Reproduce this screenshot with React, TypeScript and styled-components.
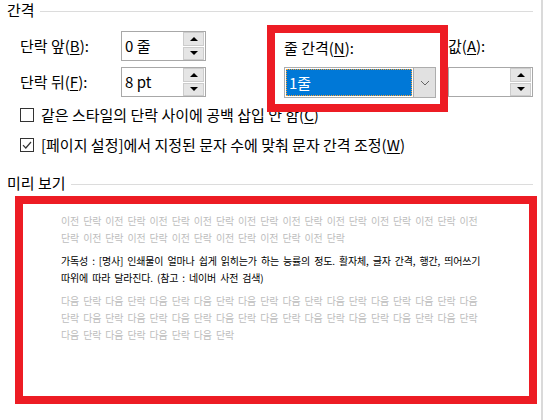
import React from 'react';
import styled, { createGlobalStyle } from 'styled-components';

const GlobalStyle = createGlobalStyle`
  html, body {
    margin: 0;
    padding: 0;
    background: #fff;
  }
  body {
    font-family: 'Noto Sans CJK KR', 'Noto Sans', sans-serif;
    color: #000;
  }
`;

const PREV_LINES = ['이전 단락 '.repeat(9) + '이전', '단락' + ' 이전 단락'.repeat(6)];
const BODY_LINES = [
  '가독성 : [명사] 인쇄물이 얼마나 쉽게 읽히는가 하는 능률의 정도. 활자체, 글자 간격, 행간, 띄어쓰기',
  '따위에 따라 달라진다. (참고 : 네이버 사전 검색)',
];
const NEXT_LINES = [
  '다음 단락 '.repeat(9) + '다음',
  '단락' + ' 다음 단락'.repeat(9),
  '다음 단락 '.repeat(3) + '다음 단락',
];

function Spin({ value }: { value: string }) {
  return (
    <SpinBox>
      <SpinValue>{value}</SpinValue>
      <SpinButtons>
        <SpinButton>
          <Arrow $dir="up" />
        </SpinButton>
        <SpinButton>
          <Arrow $dir="down" />
        </SpinButton>
      </SpinButtons>
    </SpinBox>
  );
}

function Check({ checked, children }: { checked?: boolean; children: React.ReactNode }) {
  return (
    <CheckRow>
      <CheckBox>
        {checked && (
          <svg width="12" height="12" viewBox="0 0 12 12">
            <polyline points="2,6.2 4.8,9 10,3" fill="none" stroke="#333" strokeWidth="1.2" />
          </svg>
        )}
      </CheckBox>
      <span>{children}</span>
    </CheckRow>
  );
}

export default function App() {
  return (
    <>
      <GlobalStyle />
      <Page>
        <GroupHeader>
          <GroupTitle>간격</GroupTitle>
          <Rule />
        </GroupHeader>

        <SpacingRow>
          <LeftCol>
            <FieldRow>
              <FieldLabel>
                단락 앞(<U>B</U>):
              </FieldLabel>
              <Spin value="0 줄" />
            </FieldRow>
            <FieldRow>
              <FieldLabel>
                단락 뒤(<U>F</U>):
              </FieldLabel>
              <Spin value="8 pt" />
            </FieldRow>
          </LeftCol>

          <Highlight>
            <SmallLabel>
              줄 간격(<U>N</U>):
            </SmallLabel>
            <Dropdown>
              <Selected>1줄</Selected>
              <DropButton>
                <svg width="10" height="6" viewBox="0 0 10 6">
                  <polyline points="1,1 5,5 9,1" fill="none" stroke="#666" strokeWidth="1" />
                </svg>
              </DropButton>
            </Dropdown>
          </Highlight>

          <RightCol>
            <SmallLabel>
              값(<U>A</U>):
            </SmallLabel>
            <Spin value="" />
          </RightCol>
        </SpacingRow>

        <CheckList>
          <Check>
            같은 스타일의 단락 사이에 공백 삽입 안 함(<U>C</U>)
          </Check>
          <Check checked>
            [페이지 설정]에서 지정된 문자 수에 맞춰 문자 간격 조정(<U>W</U>)
          </Check>
        </CheckList>

        <GroupHeader $top={13}>
          <GroupTitle>미리 보기</GroupTitle>
          <Rule />
        </GroupHeader>

        <PreviewBox>
          <PreviewPara $muted>
            {PREV_LINES.map((l, i) => (
              <PreviewLine key={i}>{l}</PreviewLine>
            ))}
          </PreviewPara>
          <PreviewPara>
            {BODY_LINES.map((l, i) => (
              <PreviewLine key={i}>{l}</PreviewLine>
            ))}
          </PreviewPara>
          <PreviewPara $muted>
            {NEXT_LINES.map((l, i) => (
              <PreviewLine key={i}>{l}</PreviewLine>
            ))}
          </PreviewPara>
        </PreviewBox>
      </Page>
    </>
  );
}

const Page = styled.div`
  width: 541px;
  height: 420px;
  border-right: 2px solid #dadada;
  overflow: hidden;
  font-size: 15px;
`;

const U = styled.u`
  text-decoration-thickness: 1px;
  text-underline-offset: 2px;
`;

const GroupHeader = styled.div<{ $top?: number }>`
  display: flex;
  align-items: flex-start;
  height: 20px;
  margin-top: ${({ $top }) => $top ?? 0}px;
  padding-left: 7px;
`;

const GroupTitle = styled.span`
  font-size: 15px;
  line-height: 20px;
`;

const Rule = styled.div`
  flex: 1;
  height: 1px;
  margin: 11px 8px 0 5px;
  background: #dcdcdc;
`;

const SpacingRow = styled.div`
  display: flex;
  align-items: flex-start;
  height: 75px;
  margin-top: 5px;
`;

const LeftCol = styled.div`
  display: flex;
  flex-direction: column;
  gap: 6px;
  padding: 6px 0 0 20px;
`;

const FieldRow = styled.div`
  display: flex;
  align-items: center;
  height: 30px;
`;

const FieldLabel = styled.span`
  width: 101px;
  line-height: 30px;
`;

const SpinBox = styled.div`
  display: flex;
  width: 85px;
  height: 30px;
  box-sizing: border-box;
  border: 1px solid #a8a8a8;
  background: #fff;
`;

const SpinValue = styled.span`
  flex: 1;
  padding-left: 3px;
  line-height: 27px;
`;

const SpinButtons = styled.div`
  display: flex;
  flex-direction: column;
  gap: 1px;
  width: 21px;
  margin: 0 1px 0 0;
`;

const SpinButton = styled.div`
  flex: 1;
  display: flex;
  align-items: center;
  justify-content: center;
  box-sizing: border-box;
  background: #e5e5e5;
  border: 1px solid #cccccc;
`;

const Arrow = styled.span<{ $dir: 'up' | 'down' }>`
  width: 0;
  height: 0;
  border-left: 4px solid transparent;
  border-right: 4px solid transparent;
  ${({ $dir }) => ($dir === 'up' ? 'border-bottom: 4px solid #000;' : 'border-top: 4px solid #000;')}
`;

const Highlight = styled.div`
  position: relative;
  z-index: 1;
  flex: none;
  width: 181px;
  box-sizing: border-box;
  margin-left: 61px;
  padding: 0 4px 6px 9px;
  border: 8px solid #ed1c24;
  display: flex;
  flex-direction: column;
  gap: 4px;
`;

const SmallLabel = styled.span`
  height: 30px;
  line-height: 30px;
  white-space: nowrap;
`;

const Dropdown = styled.div`
  display: flex;
  width: 152px;
  height: 31px;
  box-sizing: border-box;
  border: 1px solid #adadad;
  background: #fff;
`;

const Selected = styled.div`
  flex: 1;
  margin: 1px;
  box-sizing: border-box;
  border: 1px dotted #f7a234;
  background: #0078d7;
  color: #fff;
  padding-left: 2px;
  line-height: 25px;
`;

const DropButton = styled.div`
  width: 21px;
  display: flex;
  align-items: center;
  justify-content: center;
  border-left: 1px solid #adadad;
  background: #e1e1e1;
`;

const RightCol = styled.div`
  display: flex;
  flex-direction: column;
  gap: 6px;
  padding-top: 6px;
`;

const CheckList = styled.div`
  display: flex;
  flex-direction: column;
  padding-left: 20px;
`;

const CheckRow = styled.label`
  display: flex;
  align-items: center;
  gap: 7px;
  height: 30px;
  line-height: 30px;
  white-space: nowrap;
`;

const CheckBox = styled.span`
  width: 14px;
  height: 14px;
  box-sizing: border-box;
  border: 1px solid #333;
  background: #fff;
  display: flex;
  align-items: center;
  justify-content: center;
`;

const PreviewBox = styled.div`
  width: 522px;
  height: 208px;
  box-sizing: border-box;
  margin: 3px 0 0 15px;
  padding: 8px 0 0 38px;
  border: 8px solid #ed1c24;
  background: #fff;
  display: flex;
  flex-direction: column;
  gap: 6px;
`;

const PreviewPara = styled.div<{ $muted?: boolean }>`
  font-size: 10px;
  line-height: 17px;
  letter-spacing: -0.2px;
  word-spacing: 2.1px;
  color: ${({ $muted }) => ($muted ? '#bdbdbd' : '#000')};
`;

const PreviewLine = styled.div`
  white-space: pre;
`;
